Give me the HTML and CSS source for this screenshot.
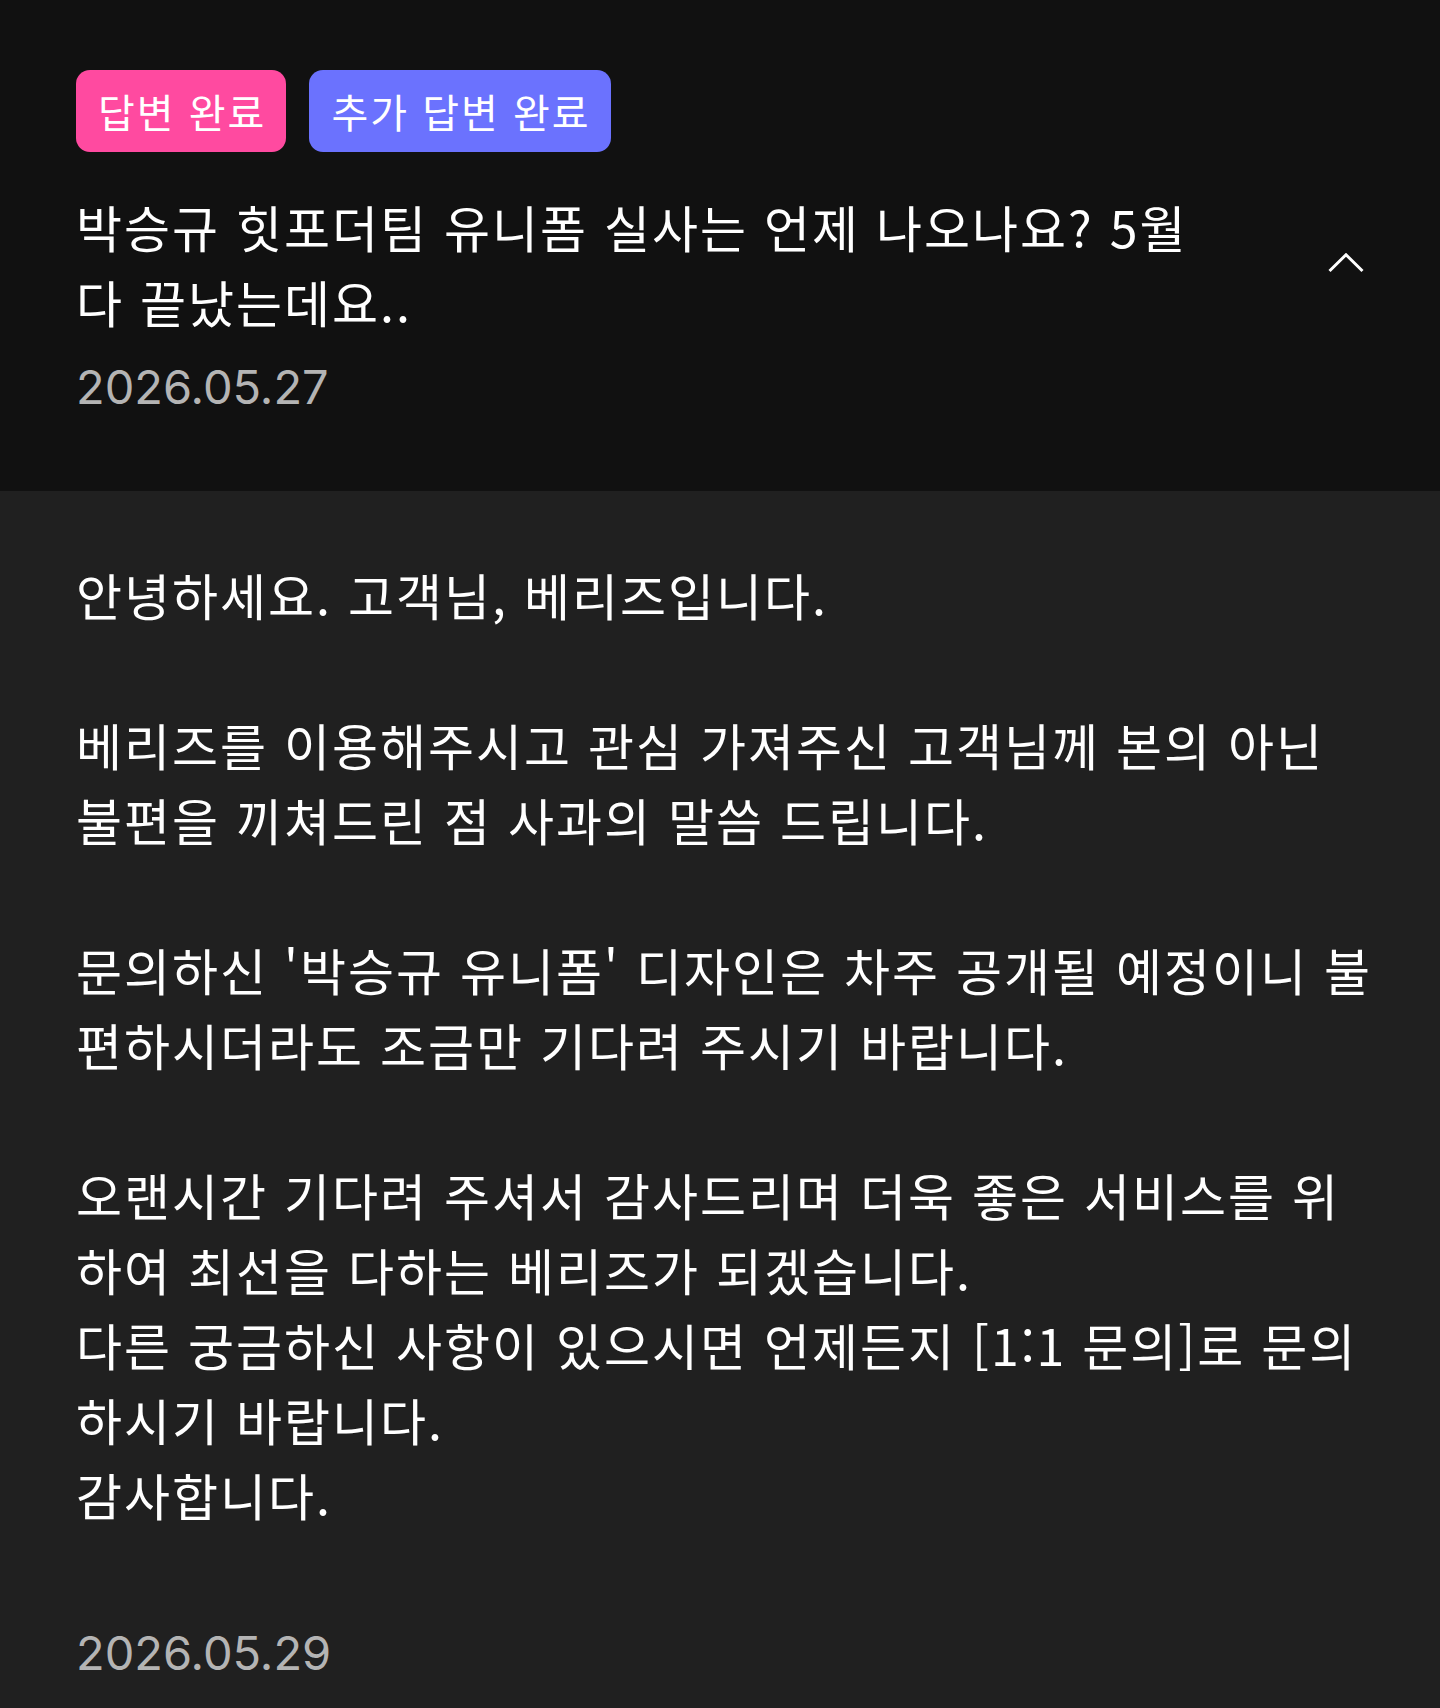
FILE: index.html
```html
<!DOCTYPE html>
<html lang="ko">
<head>
  <meta charset="UTF-8" />
  <meta name="viewport" content="width=device-width, initial-scale=1.0" />
  <title>문의 상세</title>
  <link rel="stylesheet" href="styles.css">
</head>
<body>
  <div class="question">
    <div class="badges">
      <span class="badge badge-done">답변 완료</span>
      <span class="badge badge-extra">추가 답변 완료</span>
    </div>

    <div class="title-row">
      <div class="title">박승규 힛포더팀 유니폼 실사는 언제 나오나요? 5월 다 끝났는데요..</div>
      <svg class="chevron" width="36" height="20" viewBox="0 0 36 20">
        <polyline points="1.5,18 18,1.8 34.5,18" fill="none" stroke="#fff" stroke-width="3" />
      </svg>
    </div>

    <div class="date">2026.05.27</div>
  </div>

  <div class="answer">
    <div class="answer-text">안녕하세요. 고객님, 베리즈입니다.

베리즈를 이용해주시고 관심 가져주신 고객님께 본의 아닌 불편을 끼쳐드린 점 사과의 말씀 드립니다.

문의하신 '박승규 유니폼' 디자인은 차주 공개될 예정이니 불편하시더라도 조금만 기다려 주시기 바랍니다.

오랜시간 기다려 주셔서 감사드리며 더욱 좋은 서비스를 위하여 최선을 다하는 베리즈가 되겠습니다.
다른 궁금하신 사항이 있으시면 언제든지 [1:1 문의]로 문의하시기 바랍니다.
감사합니다.</div>

    <div class="date">2026.05.29</div>
  </div>
</body>
</html>
```

FILE: styles.css
```css
body {
  margin: 0;
  font-family: "Noto Sans CJK KR", sans-serif;
  background-color: #202020;
  color: #fff;
}

.question {
  background-color: #111111;
  padding: 70px 76px 68px;
}

.badges {
  display: flex;
  gap: 23px;
}

.badge {
  font-size: 40px;
  line-height: 60px;
  letter-spacing: 2px;
  padding: 11px 20px 11px 22px;
  border-radius: 14px;
  color: #fff;
}

.badge-done {
  background-color: #ff4aa0;
}

.badge-extra {
  background-color: #6b72fe;
}

.title-row {
  display: flex;
  align-items: center;
  margin-top: 37px;
}

.title {
  flex: 1;
  font-size: 50px;
  line-height: 75px;
  letter-spacing: 2px;
}

.chevron {
  flex-shrink: 0;
  margin-left: 102px;
  margin-bottom: 2px;
}

/* 날짜는 숫자만 있어서 라틴 폰트 사용 */
.date {
  font-family: Inter, "Noto Sans CJK KR", sans-serif;
  font-size: 47px;
  line-height: 72px;
  color: #b4b4b4;
  margin-top: 12px;
}

.answer {
  padding: 66px 64px 40px 76px;
}

.answer-text {
  font-size: 50px;
  line-height: 75px;
  letter-spacing: 2px;
  white-space: pre-line;
}

.answer .date {
  margin-top: 85px;
}
```
